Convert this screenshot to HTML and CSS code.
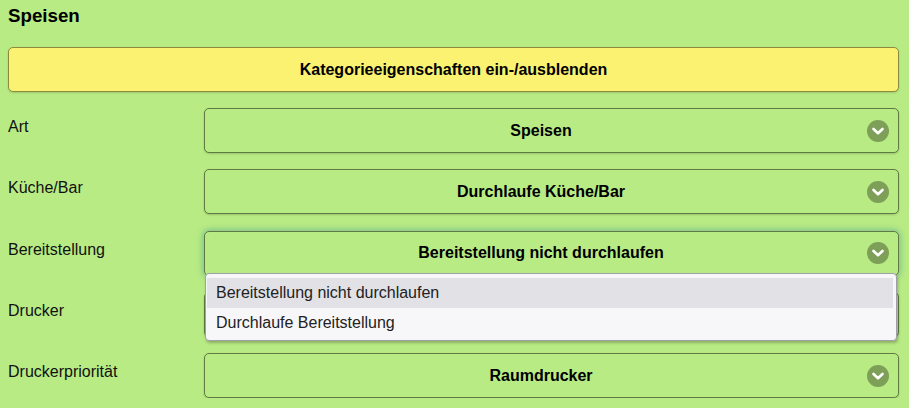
FILE: index.html
```html
<!DOCTYPE html>
<html lang="de">
<head>
<meta charset="utf-8">
<title>Speisen</title>
<link rel="stylesheet" href="styles.css">
</head>
<body>
<div class="page">
  <h3 class="title">Speisen</h3>
  <button class="toggle">Kategorieeigenschaften ein-/ausblenden</button>
  <div class="form">
    <div class="label">Art</div>
    <div class="select"><span class="value">Speisen</span><svg class="chev" width="22" height="22" viewBox="0 0 22 22"><circle cx="11" cy="11" r="11" fill="#7e9f58"/><polyline points="6.5,9 11,13.2 15.5,9" fill="none" stroke="#fff" stroke-width="2.6" stroke-linecap="round" stroke-linejoin="round"/></svg></div>

    <div class="label">Küche/Bar</div>
    <div class="select"><span class="value">Durchlaufe Küche/Bar</span><svg class="chev" width="22" height="22" viewBox="0 0 22 22"><circle cx="11" cy="11" r="11" fill="#7e9f58"/><polyline points="6.5,9 11,13.2 15.5,9" fill="none" stroke="#fff" stroke-width="2.6" stroke-linecap="round" stroke-linejoin="round"/></svg></div>

    <div class="label">Bereitstellung</div>
    <div class="select-wrap">
      <div class="select focused"><span class="value">Bereitstellung nicht durchlaufen</span><svg class="chev" width="22" height="22" viewBox="0 0 22 22"><circle cx="11" cy="11" r="11" fill="#7e9f58"/><polyline points="6.5,9 11,13.2 15.5,9" fill="none" stroke="#fff" stroke-width="2.6" stroke-linecap="round" stroke-linejoin="round"/></svg></div>
      <ul class="menu">
        <li class="opt active">Bereitstellung nicht durchlaufen</li>
        <li class="opt">Durchlaufe Bereitstellung</li>
      </ul>
    </div>

    <div class="label">Drucker</div>
    <div class="select"><span class="value">Standarddrucker</span><svg class="chev" width="22" height="22" viewBox="0 0 22 22"><circle cx="11" cy="11" r="11" fill="#7e9f58"/><polyline points="6.5,9 11,13.2 15.5,9" fill="none" stroke="#fff" stroke-width="2.6" stroke-linecap="round" stroke-linejoin="round"/></svg></div>

    <div class="label">Druckerpriorität</div>
    <div class="select"><span class="value">Raumdrucker</span><svg class="chev" width="22" height="22" viewBox="0 0 22 22"><circle cx="11" cy="11" r="11" fill="#7e9f58"/><polyline points="6.5,9 11,13.2 15.5,9" fill="none" stroke="#fff" stroke-width="2.6" stroke-linecap="round" stroke-linejoin="round"/></svg></div>
  </div>
</div>
</body>
</html>
```

FILE: styles.css
```css
html, body {
  margin: 0;
  padding: 0;
  background: #b8eb84;
  font-family: "Liberation Sans", Arial, sans-serif;
  color: #111;
}

.page {
  padding: 0 10px 0 8px;
}

.title {
  margin: 0;
  padding-top: 5px;
  font-size: 18.72px;
  line-height: 22px;
  font-weight: bold;
  color: #000;
}

.toggle {
  display: block;
  width: 100%;
  height: 45px;
  margin-top: 20px;
  background: #faf270;
  border: 1px solid #8c8a3c;
  border-radius: 5px;
  font-family: inherit;
  font-size: 16px;
  font-weight: bold;
  color: #000;
  box-shadow: 0 1px 2px rgba(0, 0, 0, 0.15);
  padding: 0;
}

.form {
  display: grid;
  grid-template-columns: 196px 1fr;
  row-gap: 16.25px;
  margin-top: 16px;
}

.label {
  font-size: 16px;
  line-height: 18px;
  padding-top: 10px;
  color: #111;
}

.select-wrap {
  position: relative;
}

.select {
  height: 45px;
  box-sizing: border-box;
  border: 1px solid #5f7a42;
  border-radius: 5px;
  background: #b8eb84;
  display: flex;
  align-items: center;
  padding: 0 9px 0 10px;
  box-shadow: 0 1px 2px rgba(0, 0, 0, 0.18);
}

.select.focused {
  box-shadow: 0 0 6px 1px rgba(60, 150, 150, 0.55);
}

.value {
  flex: 1;
  text-align: center;
  font-size: 16px;
  font-weight: bold;
  color: #000;
}

.chev {
  flex: none;
  display: block;
}

.menu {
  position: absolute;
  left: 1px;
  right: 2px;
  top: 42px;
  margin: 0;
  list-style: none;
  background: #f7f7fa;
  border: 1px solid #a0a0a8;
  border-radius: 4px;
  padding: 4px 3px 2px 1px;
  box-shadow: 1px 2px 3px rgba(0, 0, 0, 0.25);
  z-index: 5;
}

.opt {
  height: 30px;
  line-height: 30px;
  padding-left: 9px;
  font-size: 16px;
  color: #222;
}

.opt.active {
  background: #e1e1e6;
}
```
